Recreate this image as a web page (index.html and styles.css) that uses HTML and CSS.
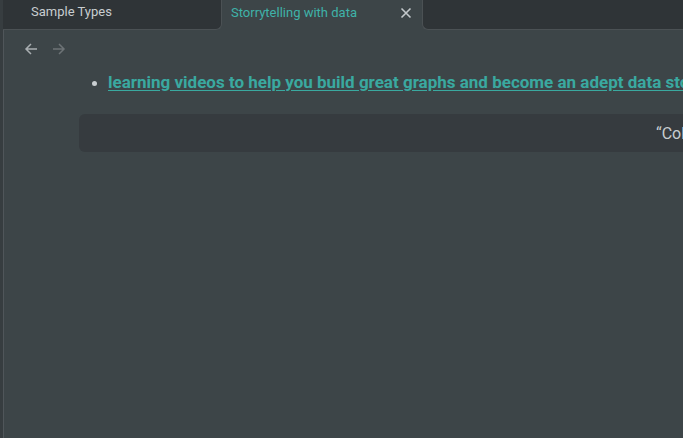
FILE: index.html
```html
<!DOCTYPE html>
<html>
<head>
<meta charset="utf-8">
<link rel="stylesheet" href="styles.css">
</head>
<body>
<div class="window">
  <div class="tabbar">
    <div class="tab inactive"><span class="tab-title">Sample Types</span></div>
    <div class="tab active">
      <span class="tab-title">Storrytelling with data</span>
      <svg class="close" width="12" height="12" viewBox="0 0 12 12"><path d="M1.5 1.5 L10.5 10.5 M10.5 1.5 L1.5 10.5" stroke="#c3c8cb" stroke-width="1.6" fill="none"/></svg>
    </div>
    <div class="tab-rest"></div>
  </div>
  <div class="content">
    <div class="nav">
      <svg class="arrow" width="14" height="14" viewBox="0 0 14 14"><path d="M13 7 H2 M7 2 L2 7 L7 12" stroke="#a9aeb1" stroke-width="1.5" fill="none"/></svg>
      <svg class="arrow dim" width="14" height="14" viewBox="0 0 14 14"><path d="M1 7 H12 M7 2 L12 7 L7 12" stroke="#6d7376" stroke-width="1.5" fill="none"/></svg>
    </div>
    <ul class="list">
      <li><a class="link">learning videos to help you build great graphs and become an adept data storyteller</a></li>
    </ul>
    <div class="quote-block"><span class="quote">“Color can be used to draw attention</span></div>
  </div>
</div>
</body>
</html>
```
FILE: styles.css
```css
html, body {
  margin: 0;
  padding: 0;
  height: 100%;
  overflow: hidden;
}
body {
  background: #3d4548;
  font-family: Roboto, "Liberation Sans", sans-serif;
}
.window {
  height: 100%;
  border-left: 3px solid #373d40;
  box-shadow: inset 1px 0 0 #50565a;
  overflow: hidden;
}
.tabbar {
  display: flex;
  height: 30px;
  margin-left: -3px;
}
.tab {
  display: flex;
  align-items: center;
  box-sizing: border-box;
  height: 30px;
  font-size: 13px;
}
.tab.inactive {
  width: 222px;
  background: #2f3437;
  border-right: 1px solid #4b5154;
  border-bottom: 1px solid #4b5154;
  border-bottom-right-radius: 6px;
  padding-left: 31px;
  padding-bottom: 6px;
  color: #c8cdd0;
  box-shadow: inset 3px 0 0 #33393c;
}
.tab.active {
  width: 200px;
  padding-left: 9px;
  padding-right: 10px;
  padding-bottom: 6px;
  color: #3fb3a9;
  justify-content: space-between;
}
.close {
  margin-top: 1px;
}
.tab-rest {
  flex: 1;
  height: 30px;
  box-sizing: border-box;
  background: #2f3437;
  border-left: 1px solid #4b5154;
  border-bottom: 1px solid #4b5154;
  border-bottom-left-radius: 6px;
}
.content {
  padding-left: 21px;
}
.nav {
  display: flex;
  gap: 14px;
  height: 38px;
  align-items: center;
}
.arrow {
  display: block;
}
.list {
  margin: 4px 0 0;
  padding-left: 84px;
  color: #c9ced1;
  font-size: 17px;
  line-height: 20px;
  white-space: nowrap;
}
.list li::marker {
  font-size: 15px;
}
.link {
  color: #3aa9a0;
  font-weight: 700;
  text-decoration: underline;
  text-underline-offset: 2px;
}
.quote-block {
  margin-top: 22px;
  margin-left: 55px;
  width: 900px;
  height: 38px;
  border-radius: 6px;
  background: #363b3f;
  display: flex;
  align-items: center;
  padding-left: 577px;
  box-sizing: border-box;
  white-space: nowrap;
}
.quote {
  color: #c8cdd0;
  font-size: 16px;
}
```
